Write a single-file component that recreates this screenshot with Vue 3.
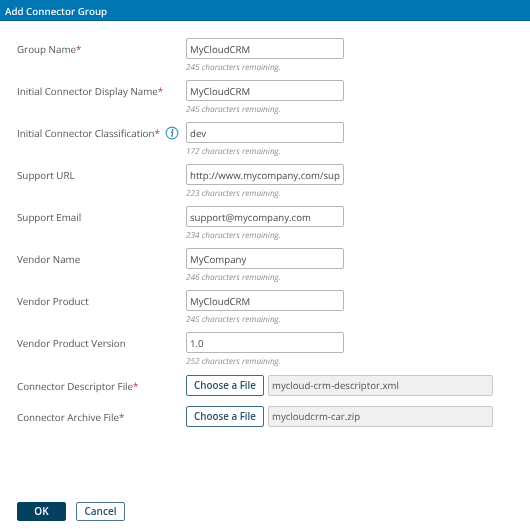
<script setup>
const rows = [
  { label: 'Group Name', req: true, value: 'MyCloudCRM', hint: '245 characters remaining.' },
  { label: 'Initial Connector Display Name', req: true, value: 'MyCloudCRM', hint: '245 characters remaining.' },
  { label: 'Initial Connector Classification', req: true, info: true, value: 'dev', hint: '172 characters remaining.' },
  { label: 'Support URL', value: 'http://www.mycompany.com/support', hint: '223 characters remaining.' },
  { label: 'Support Email', value: 'support@mycompany.com', hint: '234 characters remaining.' },
  { label: 'Vendor Name', value: 'MyCompany', hint: '246 characters remaining.' },
  { label: 'Vendor Product', value: 'MyCloudCRM', hint: '245 characters remaining.' },
  { label: 'Vendor Product Version', value: '1.0', hint: '252 characters remaining.' }
]
const files = [
  { label: 'Connector Descriptor File', name: 'mycloud-crm-descriptor.xml' },
  { label: 'Connector Archive File', name: 'mycloudcrm-car.zip' }
]
</script>

<template>
  <div class="dialog">
    <header class="title">Add Connector Group</header>
    <main class="form">
      <div v-for="row in rows" :key="row.label" class="row">
        <div class="label">
          <span>{{ row.label }}<span v-if="row.req" class="req">*</span></span>
          <svg v-if="row.info" class="info" viewBox="0 0 14 14" width="14" height="14">
            <circle cx="7" cy="7" r="5.9" fill="none" stroke="#2a9bb8" stroke-width="1.1" />
            <circle cx="7.6" cy="3.9" r="0.9" fill="#1f6f8f" />
            <path d="M6 6.1h1.7l-0.9 3.7c-0.1 0.4 0.2 0.5 0.9 0.2" fill="none" stroke="#1f6f8f" stroke-width="1.1" />
          </svg>
        </div>
        <div class="field">
          <div class="input"><div class="input-text">{{ row.value }}</div></div>
          <div class="hint">{{ row.hint }}</div>
        </div>
      </div>
      <div class="files">
        <div v-for="f in files" :key="f.label" class="file-row">
          <div class="label"><span>{{ f.label }}<span class="req">*</span></span></div>
          <button class="choose">Choose a File</button>
          <div class="file-name">{{ f.name }}</div>
        </div>
      </div>
    </main>
    <footer class="actions">
      <button class="ok">OK</button>
      <button class="cancel">Cancel</button>
    </footer>
  </div>
</template>

<style scoped>
.dialog {
  width: 530px;
  height: 529px;
  display: flex;
  flex-direction: column;
  background: #fff;
  font-family: "Open Sans", "Noto Sans", sans-serif;
  color: #555;
  overflow: hidden;
  text-rendering: geometricPrecision;
  filter: blur(0.3px);
}
.title {
  height: 20px;
  line-height: 23px;
  padding-left: 5px;
  background: #0077b3;
  border-bottom: 1px solid #005f8f;
  color: #eef6fb;
  font-size: 9.75px;
  font-weight: 600;
}
.form {
  flex: 1;
  padding: 17px 0 0 17px;
}
.row {
  display: flex;
  height: 42px;
}
.label {
  width: 169px;
  height: 21px;
  display: flex;
  align-items: center;
  justify-content: space-between;
  padding: 1px 7px 0 0;
  box-sizing: border-box;
  font-size: 9.8px;
  white-space: nowrap;
  flex: none;
}
.req {
  color: #b5354f;
}
.info {
  flex: none;
  margin-top: -1px;
}
.input {
  width: 158px;
  height: 21px;
  box-sizing: border-box;
  border: 1px solid #b5b5b5;
  border-radius: 2px;
  padding: 0 3px;
  line-height: 21px;
  font-size: 9.65px;
  color: #4a4a4a;
}
.input-text {
  height: 19px;
  white-space: nowrap;
  overflow: hidden;
}
.hint {
  margin-top: 4px;
  font-size: 8.2px;
  line-height: 10px;
  font-style: italic;
  color: #8f8f8f;
}
.files {
  margin-top: 1px;
  display: flex;
  flex-direction: column;
  gap: 10px;
}
.file-row {
  display: flex;
  align-items: center;
  height: 21px;
}
.choose {
  width: 78px;
  height: 21px;
  box-sizing: border-box;
  padding: 0;
  border: 1px solid #3d6a85;
  border-radius: 2px;
  background: #fff;
  color: #2a526c;
  font: 600 9.8px "Open Sans", sans-serif;
}
.file-name {
  width: 225px;
  height: 21px;
  margin-left: 4px;
  box-sizing: border-box;
  border: 1px solid #c8c8c8;
  border-radius: 2px;
  background: #f0f0f0;
  padding-left: 3px;
  line-height: 20px;
  font-size: 9.65px;
  color: #555;
}
.actions {
  display: flex;
  gap: 10px;
  padding: 0 0 8px 17px;
}
.actions button {
  width: 49px;
  height: 19px;
  box-sizing: border-box;
  padding: 0 0 1px;
  border-radius: 2px;
  font: 600 10px "Open Sans", sans-serif;
}
.ok {
  background: #06405f;
  border: 1px solid #06405f;
  color: #fff;
}
.cancel {
  background: #fff;
  border: 1px solid #4a7590;
  color: #2a526c;
}
</style>

<style>
html, body { margin: 0; background: #fff; }
</style>
